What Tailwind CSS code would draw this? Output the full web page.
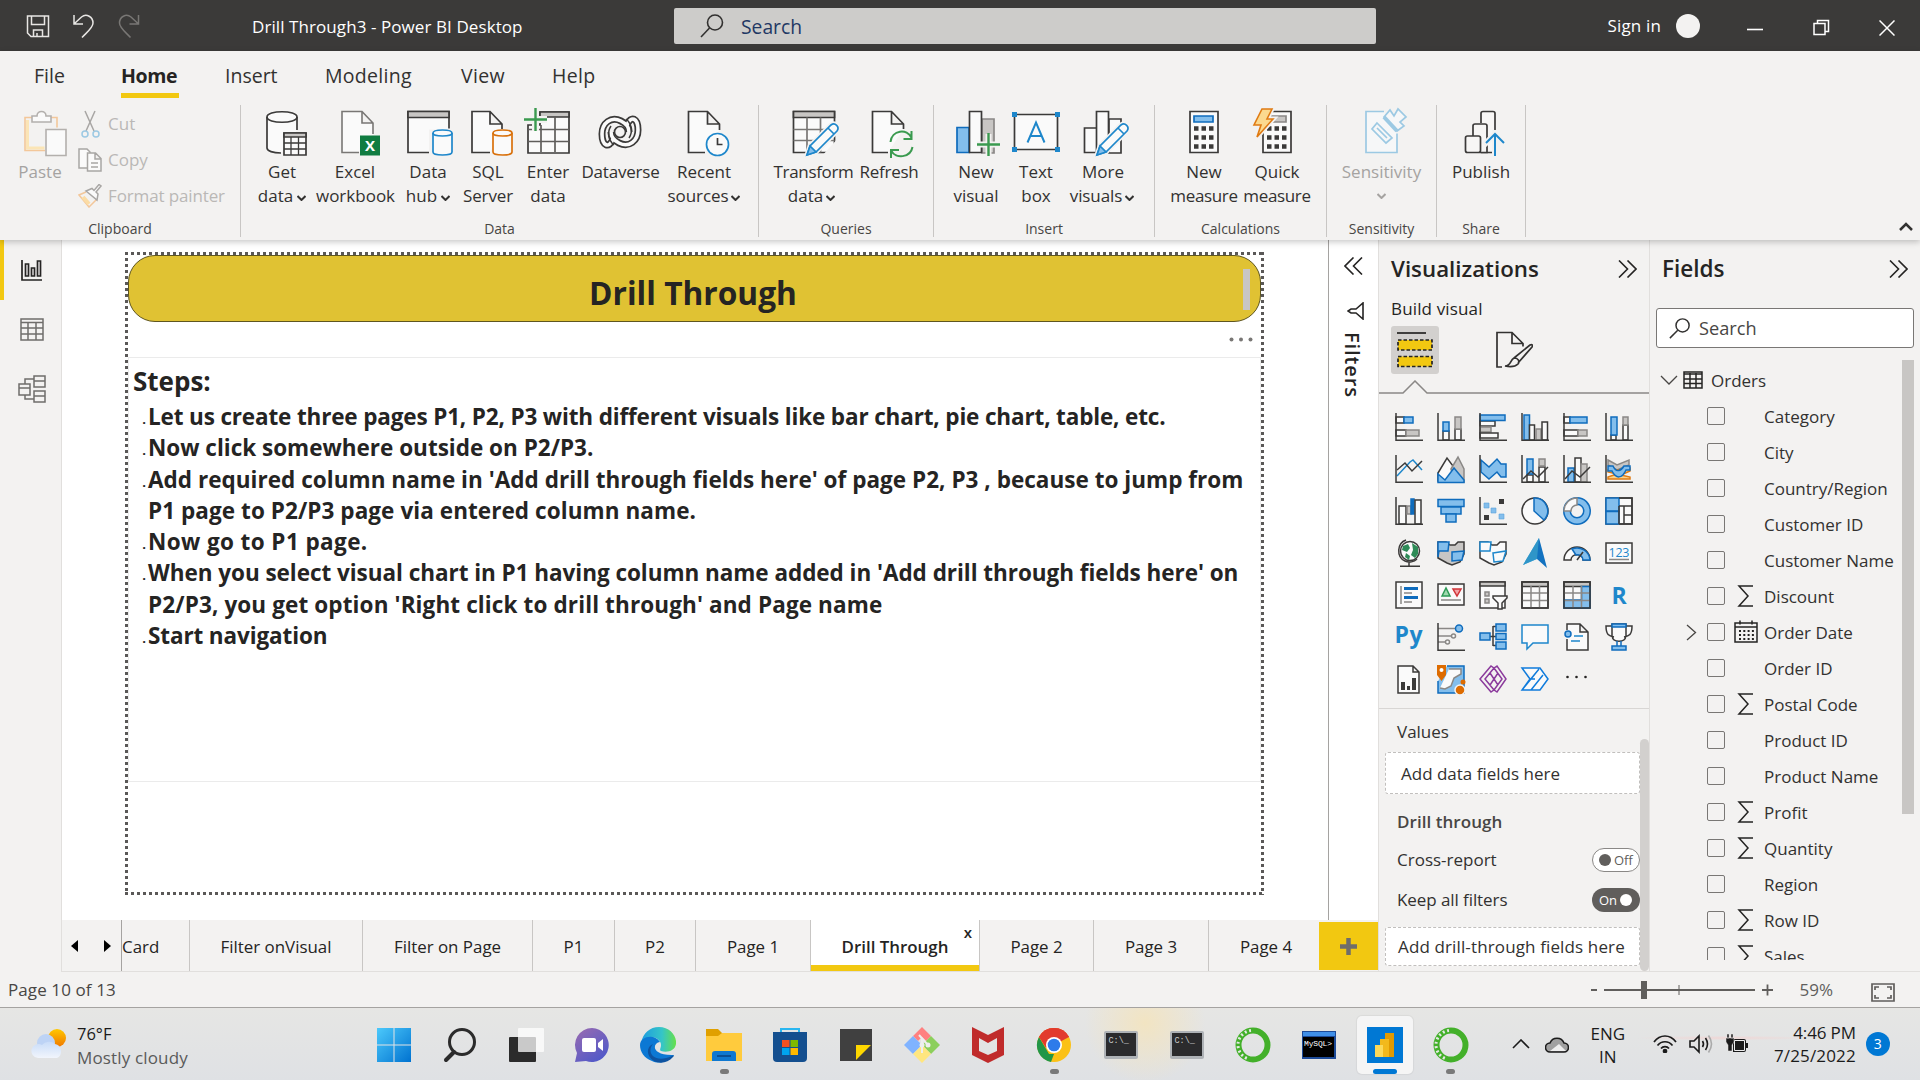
<!DOCTYPE html>
<html lang="en">
<head>
<meta charset="utf-8">
<title>Drill Through3 - Power BI Desktop</title>
<script src="https://cdn.jsdelivr.net/npm/@tailwindcss/browser@4"></script>
</head>
<body class="w-[1920px] h-[1080px] overflow-hidden flex flex-col font-['Open_Sans','Noto_Sans',sans-serif] text-[17px] text-[#323130] bg-[#f3f2f1] whitespace-nowrap">

<!-- Title bar -->
<header class="h-[51px] shrink-0 bg-[#3b3a39] flex items-center text-white">
  <div class="w-[252px] flex items-center pl-[26px] gap-[22px]">
    <svg class="w-6 h-6" viewBox="0 0 24 24" fill="none" stroke="#e8e6e4" stroke-width="1.5"><path d="M1.5 2h21v20.500h-17.500l-3.500-3.500zM5.500 2v8.500h13v-8.500M7.500 22.500v-6.500h9v6.500M11 19v3.500"/></svg>
    <svg class="w-6 h-6" viewBox="0 0 24 24" fill="none" stroke="#e8e6e4" stroke-width="1.5"><path d="M2 1v9h9M2.500 9.500l7-6.500c5-4 11.500 0 11.500 6c0 5-7 10-11 14.500"/></svg>
    <svg class="w-6 h-6" viewBox="0 0 24 24" fill="none" stroke="#797775" stroke-width="1.500"><path d="M20.500 1v9h-9M20 9.500l-7-6.500c-5-4-11.500 0-11.500 6c0 5 7 10 11 14.500"/></svg>
  </div>
  <div class="w-[422px] tracking-[0.080px] pt-[2px]">Drill Through3 - Power BI Desktop</div>
  <div class="w-[702px] h-9 mt-[1px] rounded-[2px] bg-[#cdccca] flex items-center pl-[26px] gap-[17px] text-[#1f3864]">
    <svg class="w-6 h-6" viewBox="0 0 24 24" fill="none" stroke="#323130" stroke-width="1.600"><circle cx="15" cy="8.500" r="7.500"/><path d="M9.500 14L1 23"/></svg>
    <span class="text-[19.300px] pt-[2px]">Search</span>
  </div>
  <div class="flex-1 flex items-center justify-end pr-[25px]">
    <span class="tracking-[0.150px]">Sign in</span>
    <div class="w-6 h-6 rounded-full bg-[#f3f2f1] ml-[15px] mr-[47px]"></div>
    <svg class="w-4 h-4 mr-[50px] mt-1" viewBox="0 0 16 16" stroke="#fff" stroke-width="1.600"><path d="M0 9.500h16"/></svg>
    <svg class="w-[17px] h-[17px] mr-[49px] mt-1" viewBox="0 0 17 17" fill="none" stroke="#fff" stroke-width="1.500"><path d="M1 4.500h11v11h-11zM4.500 4.500v-3h11v11h-3.500"/></svg>
    <svg class="w-4 h-4 mt-1" viewBox="0 0 16 16" stroke="#fff" stroke-width="1.500"><path d="M.5.500l15 15M15.500.500l-15 15"/></svg>
  </div>
</header>

<!-- Ribbon -->
<section class="relative z-10 h-[189px] shrink-0 bg-[#f3f2f1] shadow-[0_2px_6px_rgba(0,0,0,0.22)] flex flex-col">
  <nav class="h-[54px] flex text-[19.500px] pl-[34px]">
    <div class="w-[87px] pt-[10px]">File</div>
    <div class="w-[104px] pt-[10px]"><div class="w-[58px] h-[37px] border-b-[5px] border-[#f2c811] font-bold text-[#252423] tracking-[-0.400px]">Home</div></div>
    <div class="w-[100px] pt-[10px]">Insert</div>
    <div class="w-[136px] pt-[10px] tracking-[0.300px]">Modeling</div>
    <div class="w-[91px] pt-[10px] tracking-[0.300px]">View</div>
    <div class="pt-[10px] tracking-[0.300px]">Help</div>
  </nav>
  <div class="h-[132px] flex leading-6">
    <!-- Clipboard -->
    <div class="w-[241px] border-r border-[#c8c6c4] flex flex-col text-[#a5a3a1]">
      <div class="h-[110px] shrink-0 flex">
        <div class="w-[75px] pl-[7px] flex flex-col items-center">
          <svg class="w-[50px] h-[50px] mt-[3px] mb-[2px] ml-4 shrink-0" viewBox="0 0 50 50" fill="none" stroke="#b3b0ad" stroke-width="1.600"><path d="M9 9.500h-8v33h20M25 9.500h8v10" stroke="#f3c79a"/><path d="M3.500 12v28h17" stroke="#fbe5b6" stroke-width="3"/><path d="M8 14v-6h5c0-6 9-6 9 0h5v6z" fill="#fafafa"/><path d="M22 21.500h20v26h-20z" fill="#fafafa"/></svg>
          <span class="-ml-[2px]">Paste</span>
        </div>
        <div class="flex flex-col pl-[3px] pt-[1px] text-[#bab8b6]">
          <div class="h-9 flex items-center gap-[6px]"><svg class="w-6 h-7" viewBox="0 0 24 28" fill="none" stroke="#a8a6a4" stroke-width="1.500"><path d="M7 1l9 20M17 1l-9 20"/><g stroke="#9cc9e3"><circle cx="7" cy="24" r="3"/><circle cx="18" cy="24" r="3"/></g></svg>Cut</div>
          <div class="h-9 flex items-center gap-[6px]"><svg class="w-6 h-6" viewBox="0 0 24 24" fill="#fafafa" stroke="#a8a6a4" stroke-width="1.500"><path d="M1 1h8l3 3v16h-11z"/><path d="M9.500 5h8l5.500 5.500v12.500h-13.500zM17 5v6h6M13 15h7M13 19h7"/></svg>Copy</div>
          <div class="h-9 flex items-center gap-[6px]"><svg class="w-6 h-6" viewBox="0 0 24 24" fill="none" stroke="#a8a6a4" stroke-width="1.500"><path d="M8 8l-7 3 10 12 8-8" stroke="#f3c79a"/><path d="M5 13l6 7" stroke="#fbdca5" stroke-width="4"/><path d="M8 7l11 9 1-6-2-2 5-6-2-1.500-5 6-2-2z" fill="#fafafa"/></svg><span class="tracking-[-0.130px]">Format painter</span></div>
        </div>
      </div>
      <div class="text-center text-[14px] text-[#484644] leading-[28px]">Clipboard</div>
    </div>
    <!-- Data -->
    <div class="w-[518px] border-r border-[#c8c6c4] flex flex-col">
      <div class="h-[110px] shrink-0 flex pl-[5px]">
        <div class="w-[72px] flex flex-col items-center">
          <svg class="w-[50px] h-[50px] mt-[3px] mb-[2px] shrink-0 overflow-visible" viewBox="0 0 50 50" fill="#fafafa" stroke="#3b3a39" stroke-width="1.700"><path d="M24 45c-8 0-14-2-14-5v-31c0-7 30-7 30 0v13"/><path d="M10 9c0 7 30 7 30 0" fill="none"/><path d="M27 25h22v22h-22z"/><path d="M27 25h22v4h-22z" fill="#c8c6c4"/><path d="M27 35h22M27 41h22M34 29v18M41.500 29v18" stroke-width="1.300"/></svg>
          <span>Get</span><span class="flex items-center gap-1">data<svg class="w-[9px] h-[6px] mt-1" viewBox="0 0 9 6" fill="none" stroke="#323130" stroke-width="2"><path d="M.500 1l4 4 4-4"/></svg></span>
        </div>
        <div class="w-[74px] flex flex-col items-center">
          <svg class="w-[50px] h-[50px] mt-[3px] mb-[2px] shrink-0 overflow-visible" viewBox="0 0 50 50" fill="#fafafa" stroke="#797775" stroke-width="1.600"><path d="M29 44.500h-17v-41h20l11 11.500v11M32 3.500v11.500h11"/><path d="M30 27.500h20v20h-20z" fill="#107c41" stroke="none"/><text x="40" y="43" text-anchor="middle" font-size="15" font-weight="700" fill="#fff" stroke="none">X</text></svg>
          <span>Excel</span><span class="ml-[1px]">workbook</span>
        </div>
        <div class="w-[72px] flex flex-col items-center">
          <svg class="w-[50px] h-[50px] mt-[3px] mb-[2px] shrink-0 overflow-visible" viewBox="0 0 50 50" fill="#fafafa" stroke="#3b3a39" stroke-width="1.700"><path d="M28 44.500h-23v-41h41v17"/><path d="M5 3.500h41v6h-41z" fill="#c8c6c4"/><path d="M27.500 49v-26h20" stroke="#f3f2f1" stroke-width="3" fill="none"/><g stroke="#1e87cb"><path d="M30 25v19c0 4 19 4 19 0v-19c0-4-19-4-19 0z"/><path d="M30 25c0 4 19 4 19 0" fill="none"/></g></svg>
          <span>Data</span><span class="flex items-center gap-1">hub<svg class="w-[9px] h-[6px] mt-1" viewBox="0 0 9 6" fill="none" stroke="#323130" stroke-width="2"><path d="M.500 1l4 4 4-4"/></svg></span>
        </div>
        <div class="w-[48px] flex flex-col items-center">
          <svg class="w-[50px] h-[50px] mt-[3px] mb-[2px] shrink-0 overflow-visible" viewBox="0 0 50 50" fill="#fafafa" stroke="#3b3a39" stroke-width="1.700"><path d="M27 44.500h-18v-41h18l12 12.500v5M27 3.500v12.500h12"/><g stroke="#d9710c"><path d="M30 25v19c0 4 19 4 19 0v-19c0-4-19-4-19 0z"/><path d="M30 25c0 4 19 4 19 0" fill="none"/></g></svg>
          <span>SQL</span><span class="tracking-[-0.100px]">Server</span>
        </div>
        <div class="w-[72px] flex flex-col items-center">
          <svg class="w-[50px] h-[50px] mt-[3px] mb-[2px] shrink-0 overflow-visible" viewBox="0 0 50 50" fill="#fafafa" stroke="#3b3a39" stroke-width="1.700"><path d="M5 17h12v-13h29v41h-41z"/><path d="M17 4h29v5h-29z" fill="#c8c6c4"/><path d="M5 21.500h41M5 33.500h41M18 17v27M32 9v35" stroke="#5f5d5b"/><path d="M12.500 0v23M1 11.500h23" stroke="#f3f2f1" stroke-width="7"/><path d="M12.500 0v23M1 11.500h23" stroke="#3a9a4f" stroke-width="2.400"/></svg>
          <span>Enter</span><span>data</span>
        </div>
        <div class="w-[72px] flex flex-col items-center">
          <svg class="w-[50px] h-[50px] mt-[3px] mb-[2px] shrink-0 overflow-visible" viewBox="0 0 50 50" fill="none"><g stroke="#3b3a39" stroke-width="7"><path d="M18 31c-4 10-11 7-11-5c0-11 9-18 19-13c6 3 8 6 8 11"/><path d="M32 17c4-10 11-7 11 5c0 11-9 18-19 13c-6-3-8-6-8-11"/></g><g stroke="#fafafa" stroke-width="3.600"><path d="M18 31c-4 10-11 7-11-5c0-11 9-18 19-13c6 3 8 6 8 11"/><path d="M32 17c4-10 11-7 11 5c0 11-9 18-19 13c-6-3-8-6-8-11"/></g><circle cx="25" cy="24" r="5.500" fill="#f3f2f1" stroke="#3b3a39" stroke-width="1.700"/><path d="M31 11c6 5 7 13 3 19M19 37c-6-5-7-13-3-19" stroke="#3b3a39" stroke-width="1.500"/></svg>
          <span class="tracking-[-0.200px] ml-[1px]">Dataverse</span>
        </div>
        <div class="w-[96px] flex flex-col items-center">
          <svg class="w-[50px] h-[50px] mt-[3px] mb-[2px] shrink-0 overflow-visible" viewBox="0 0 50 50" fill="#fafafa" stroke="#3b3a39" stroke-width="1.700"><path d="M26 44.500h-16.500v-41h19l12 12.500v6M28.500 3.500v12.500h12"/><circle cx="38.500" cy="36.500" r="11" stroke="#1e87cb"/><path d="M38.500 30v6.500h5" fill="none"/></svg>
          <span>Recent</span><span class="flex items-center gap-[3px] tracking-[-0.100px]">sources<svg class="w-[9px] h-[6px] mt-1" viewBox="0 0 9 6" fill="none" stroke="#323130" stroke-width="2"><path d="M.500 1l4 4 4-4"/></svg></span>
        </div>
      </div>
      <div class="text-center text-[14px] text-[#484644] leading-[28px]">Data</div>
    </div>
    <!-- Queries -->
    <div class="w-[175px] border-r border-[#c8c6c4] flex flex-col">
      <div class="h-[110px] shrink-0 flex pl-[6px]">
        <div class="w-[96px] flex flex-col items-center">
          <svg class="w-[50px] h-[50px] mt-[3px] mb-[2px] shrink-0 overflow-visible" viewBox="0 0 50 50" fill="#fafafa" stroke="#3b3a39" stroke-width="1.700"><path d="M5.500 3.500h41v41h-41z"/><path d="M5.500 3.500h41v6h-41z" fill="#c8c6c4"/><path d="M5.500 21.500h41M5.500 32.500h41M19 9.500v35M32.500 9.500v35" stroke="#797775"/><path d="M33 49L52 28v22z" fill="#f3f2f1" stroke="none"/><path d="M19 47l3-9 21-21c4-3 9 2 6 6l-21 21z" stroke="#f3f2f1" stroke-width="5"/><path d="M19 47l3-9 21-21c4-3 9 2 6 6l-21 21zM40 20l6 6" stroke="#1e87cb"/><path d="M19 47l3-9 6 6z" fill="#83beec" stroke="#1e87cb"/></svg>
          <span class="tracking-[-0.350px] ml-[1px]">Transform</span><span class="flex items-center gap-[3px] -ml-[3px]">data<svg class="w-[9px] h-[6px] mt-1" viewBox="0 0 9 6" fill="none" stroke="#323130" stroke-width="2"><path d="M.500 1l4 4 4-4"/></svg></span>
        </div>
        <div class="w-[56px] flex flex-col items-center">
          <svg class="w-[50px] h-[50px] mt-[3px] mb-[2px] shrink-0 overflow-visible" viewBox="0 0 50 50" fill="#fafafa" stroke="#3b3a39" stroke-width="1.700"><path d="M24 44.500h-15.500v-41h19l12 12.500v5M27.500 3.500v12.500h12"/><g fill="none" stroke="#3a9a4f" stroke-width="2"><path d="M26.500 34c1-12 17-14 21-4M47.500 23v8h-8M48.500 39c-2 11-17 12-21 4M27 50v-8h8"/></g></svg>
          <span class="tracking-[-0.250px]">Refresh</span>
        </div>
      </div>
      <div class="text-center text-[14px] text-[#484644] leading-[28px]">Queries</div>
    </div>
    <!-- Insert -->
    <div class="w-[221px] border-r border-[#c8c6c4] flex flex-col">
      <div class="h-[110px] shrink-0 flex pl-[12px]">
        <div class="w-[60px] flex flex-col items-center">
          <svg class="w-[50px] h-[50px] mt-[3px] mb-[2px] shrink-0 overflow-visible" viewBox="0 0 50 50" fill="#fafafa" stroke="#3b3a39" stroke-width="1.700"><path d="M31 11h12v34h-12z" fill="#c8c6c4" stroke="#8a8886"/><path d="M6 19.500h12v25h-12z" fill="#83beec" stroke="#0f6cbd"/><path d="M18.500 3.500h12v41h-12z"/><path d="M37.500 26v23M26 36.500h23" stroke="#f3f2f1" stroke-width="6"/><path d="M37.500 25v23M26 36.500h23" stroke="#3a9a4f" stroke-width="2.400"/></svg>
          <span>New</span><span>visual</span>
        </div>
        <div class="w-[60px] flex flex-col items-center">
          <svg class="w-[50px] h-[50px] mt-[3px] mb-[2px] shrink-0 overflow-visible" viewBox="0 0 50 50" fill="#fafafa" stroke="#3b3a39" stroke-width="1.700"><path d="M3.500 6.500h43v35h-43z"/><path d="M16.500 34.500l8.500-20 8.500 20M19.500 28h11" fill="none" stroke="#1e87cb" stroke-width="2"/><path d="M1 4h5v5h-5zM44 4h5v5h-5zM1 39h5v5h-5zM44 39h5v5h-5z" fill="#1e87cb" stroke="none"/></svg>
          <span>Text</span><span>box</span>
        </div>
        <div class="w-[74px] flex flex-col items-center">
          <svg class="w-[50px] h-[50px] mt-[3px] mb-[2px] shrink-0 overflow-visible" viewBox="0 0 50 50" fill="#fafafa" stroke="#3b3a39" stroke-width="1.700"><path d="M31 11h12v34h-12zM6.500 20h12v24.500h-12zM18.500 3.500h12v41h-12z"/><path d="M19 47l3-9 21-21c4-3 9 2 6 6l-21 21z" stroke="#f3f2f1" stroke-width="5"/><path d="M19 47l3-9 21-21c4-3 9 2 6 6l-21 21zM40 20l6 6" stroke="#1e87cb"/><path d="M19 47l3-9 6 6z" fill="#83beec" stroke="#1e87cb"/></svg>
          <span>More</span><span class="flex items-center gap-[3px] tracking-[-0.100px] -ml-[2px]">visuals<svg class="w-[9px] h-[6px] mt-1" viewBox="0 0 9 6" fill="none" stroke="#323130" stroke-width="2"><path d="M.500 1l4 4 4-4"/></svg></span>
        </div>
      </div>
      <div class="text-center text-[14px] text-[#484644] leading-[28px]">Insert</div>
    </div>
    <!-- Calculations -->
    <div class="w-[172px] border-r border-[#c8c6c4] flex flex-col">
      <div class="h-[110px] shrink-0 flex pl-[13px]">
        <div class="w-[72px] flex flex-col items-center">
          <svg class="w-[50px] h-[50px] mt-[3px] mb-[2px] shrink-0 overflow-visible" viewBox="0 0 50 50" fill="#fafafa" stroke="#3b3a39" stroke-width="1.700"><path d="M11 3.500h28v41h-28z"/><path d="M15 8h19v6h-19z" fill="#83beec" stroke="#0f6cbd"/><path d="M15 20.500h20M15 29.500h20M15 38.500h20" stroke-width="4.500" stroke-dasharray="4.500 3"/></svg>
          <span>New</span><span class="tracking-[-0.350px]">measure</span>
        </div>
        <div class="w-[74px] flex flex-col items-center">
          <svg class="w-[50px] h-[50px] mt-[3px] mb-[2px] shrink-0 overflow-visible" viewBox="0 0 50 50" fill="#fafafa" stroke="#3b3a39" stroke-width="1.700"><path d="M11 3.500h28v41h-28z"/><path d="M16 8h18v6h-18z" fill="#c8c6c4" stroke="#8a8886"/><path d="M15 20.500h20M15 29.500h20M15 38.500h20" stroke-width="4.500" stroke-dasharray="4.500 3"/><path d="M10 1h10l-5 10h6l-16 18 4-12h-7z" stroke="#f3f2f1" stroke-width="5"/><path d="M10 1h10l-5 10h6l-16 18 4-12h-7z" fill="#fbd98f" stroke="#e07b13" stroke-width="1.600"/></svg>
          <span>Quick</span><span class="tracking-[-0.350px]">measure</span>
        </div>
      </div>
      <div class="text-center text-[14px] text-[#484644] leading-[28px]">Calculations</div>
    </div>
    <!-- Sensitivity -->
    <div class="w-[110px] border-r border-[#c8c6c4] flex flex-col">
      <div class="h-[110px] shrink-0 flex flex-col items-center text-[#a5a3a1]">
        <svg class="w-[50px] h-[50px] mt-[3px] mb-[2px] shrink-0 overflow-visible" viewBox="0 0 50 50" fill="#f6f7f8" stroke="#9cc9e3" stroke-width="1.700"><path d="M27 3.500h-18v41h31v-19"/><path d="M20 15l15 15-6 5-14-14zM20 20l10 10"/><path d="M27 9l6-7 4 6 4-7 8 8-6 5 4 4-7 5z"/><path d="M27 9l13 14" stroke-width="4"/></svg>
        <span>Sensitivity</span>
        <svg class="w-[9px] h-[6px] mt-[9px]" viewBox="0 0 9 6" fill="none" stroke="#a5a3a1" stroke-width="2"><path d="M.500 1l4 4 4-4"/></svg>
      </div>
      <div class="text-center text-[14px] text-[#484644] leading-[28px]">Sensitivity</div>
    </div>
    <!-- Share -->
    <div class="w-[89px] border-r border-[#c8c6c4] flex flex-col">
      <div class="h-[110px] shrink-0 flex flex-col items-center">
        <svg class="w-[50px] h-[50px] mt-[3px] mb-[2px] shrink-0 overflow-visible" viewBox="0 0 50 50" fill="#f7f6f5" stroke="#3b3a39" stroke-width="1.700"><path d="M25 15v-9.500q0-2 2-2h10q2 0 2 2v38q0 1-2 1h-13"/><path d="M17 28v-10q0-2 2-2h10q2 0 2 2v26.500h-6"/><rect x="9.500" y="28" width="15" height="16.500" rx="2"/><path d="M39 48v-26M28 37l11-11 11 11" stroke="#f3f2f1" stroke-width="6" fill="none"/><path d="M39 48v-22M30 35l9-9 9 9" fill="none" stroke="#1e87cb" stroke-width="2"/></svg>
        <span>Publish</span>
      </div>
      <div class="text-center text-[14px] text-[#484644] leading-[28px]">Share</div>
    </div>
    <div class="flex-1 flex justify-end items-end pr-[7px] pb-[6px]"><svg class="w-[14px] h-[9px]" viewBox="0 0 14 9" fill="none" stroke="#323130" stroke-width="2.500"><path d="M1 8l6-6 6 6"/></svg></div>
  </div>
</section>

<!-- Workspace -->
<main class="h-[732px] shrink-0 flex">
  <aside class="w-[62px] border-r border-[#e1dfdd] flex flex-col">
    <div class="h-[60px] border-l-4 border-[#f2c811] pl-[17px] flex items-center"><svg class="w-[21px] h-[22px]" viewBox="0 0 21 22" fill="none" stroke="#252423" stroke-width="1.700"><path d="M1 1v20h20M4.500 5h3v12h-3zM10.500 9h3v8h-3zM16.500 2h3v15h-3z"/></svg></div>
    <div class="h-[58px] pl-5 flex items-center"><svg class="w-6 h-[23px]" viewBox="0 0 24 23" fill="none" stroke="#6f6d6b" stroke-width="1.500"><path d="M1 1h22v21h-22zM1 4.500h22M1 10h22M1 16h22M8 4.500v17.500M16 4.500v17.500"/></svg></div>
    <div class="h-[62px] pl-[18px] flex items-center"><svg class="w-7 h-7" viewBox="0 0 28 28" fill="none" stroke="#6f6d6b" stroke-width="1.500"><path d="M1 9h11v11h-11zM1 13h11M16 1h11v11h-11zM16 6h11M16 16h11v11h-11zM16 21h11M7 9v-5h9M7 20v4h9"/></svg></div>
  </aside>

  <div class="w-[1316px] flex flex-col">
    <div class="h-[680px] flex bg-white">
      <div class="w-[1266px] pl-[63px] pt-3">
        <!-- Report page -->
        <div class="relative w-[1139px] h-[643px] p-[3px] flex flex-col text-[#252423]">
          <svg class="absolute inset-0 w-full h-full" viewBox="0 0 1139 643" fill="none" stroke="#5a5857" stroke-width="3" stroke-dasharray="3 3"><path d="M0 1.500h1139M0 641.500h1139M1.500 0v643M1137.500 0v643"/></svg>
          <div class="relative h-[67px] shrink-0 rounded-[27px] border border-[#5f5620] bg-[#e0c233] flex items-center justify-center pt-[8px] pr-[3px] text-[31.700px] font-bold">
            Drill Through
            <div class="absolute right-[10px] top-[13px] w-[7px] h-[41px] bg-[#c8c6c4]"></div>
          </div>
          <div class="h-[35px] shrink-0 flex justify-end items-center pr-2"><svg class="w-6 h-[5px]" viewBox="0 0 24 5" fill="#797775"><circle cx="2.500" cy="2.500" r="2"/><circle cx="12" cy="2.500" r="2"/><circle cx="21.500" cy="2.500" r="2"/></svg></div>
          <div class="h-[425px] shrink-0 border border-[#ebebeb] pl-1 pt-[7px] font-bold text-[22.500px]">
            <div class="text-[26px] leading-8">Steps:</div>
            <ul class="pt-[4px] leading-[31.290px]">
              <li class="flex"><span class="w-[15px] h-[31px] text-right text-[13px] leading-[37px] pr-[2px]">.</span><span class="tracking-[-0.150px]">Let us create three pages P1, P2, P3 with different visuals like bar chart, pie chart, table, etc.</span></li>
              <li class="flex"><span class="w-[15px] h-[31px] text-right text-[13px] leading-[37px] pr-[2px]">.</span><span>Now click somewhere outside on P2/P3.</span></li>
              <li class="flex"><span class="w-[15px] h-[31px] text-right text-[13px] leading-[37px] pr-[2px]">.</span><span><span class="tracking-[0.030px]">Add required column name in 'Add drill through fields here' of page P2, P3 , because to jump from</span><br><span class="tracking-[0.070px]">P1 page to P2/P3 page via entered column name.</span></span></li>
              <li class="flex"><span class="w-[15px] h-[31px] text-right text-[13px] leading-[37px] pr-[2px]">.</span><span class="tracking-[0.400px]">Now go to P1 page.</span></li>
              <li class="flex"><span class="w-[15px] h-[31px] text-right text-[13px] leading-[37px] pr-[2px]">.</span><span><span class="tracking-[-0.040px]">When you select visual chart in P1 having column name added in 'Add drill through fields here' on</span><br><span class="tracking-[0.120px]">P2/P3, you get option 'Right click to drill through' and Page name</span></span></li>
              <li class="flex"><span class="w-[15px] h-[31px] text-right text-[13px] leading-[37px] pr-[2px]">.</span><span class="tracking-[-0.120px]">Start navigation</span></li>
            </ul>
          </div>
        </div>
      </div>
      <!-- Collapsed filters pane -->
      <div class="w-[50px] border-l border-[#a5a3a1] flex flex-col items-center pt-[17px]">
        <svg class="w-[19px] h-[18px]" viewBox="0 0 19 18" fill="none" stroke="#252423" stroke-width="1.600"><path d="M9.500.500l-8.500 8.500 8.500 8.500M18 .500l-8.500 8.500 8.500 8.500"/></svg>
        <svg class="w-[17px] h-[18px] mt-[27px] ml-[3px]" viewBox="0 0 17 18" fill="none" stroke="#252423" stroke-width="1.600"><path d="M16 1v16l-7-6h-5l-3-2 3-2h5z"/></svg>
        <span class="[writing-mode:vertical-rl] mt-[12px] mr-[3px] font-semibold text-[20px] tracking-[0.900px] leading-6 text-[#252423]">Filters</span>
      </div>
    </div>
    <!-- Page tabs -->
    <div class="h-[52px] flex items-stretch border-b border-[#e1dfdd] leading-[53px] text-[#252423] text-center text-[16.900px]">
      <div class="w-[60px] border-r border-[#a5a3a1] flex items-center justify-between pl-[9px] pr-[10px]">
        <svg class="w-[7px] h-3" viewBox="0 0 7 12"><path d="M7 0v12l-7-6z"/></svg><svg class="w-[7px] h-3" viewBox="0 0 7 12"><path d="M0 0v12l7-6z"/></svg>
      </div>
      <div class="w-[68px] border-r border-[#c8c6c4] text-left">Card</div>
      <div class="w-[173px] border-r border-[#c8c6c4]">Filter onVisual</div>
      <div class="w-[170px] border-r border-[#c8c6c4]">Filter on Page</div>
      <div class="w-[82px] border-r border-[#c8c6c4]">P1</div>
      <div class="w-[81px] border-r border-[#c8c6c4]">P2</div>
      <div class="w-[115px] border-r border-[#c8c6c4]">Page 1</div>
      <div class="relative w-[169px] border-r border-[#c8c6c4] bg-white shadow-[inset_0_-6px_#f2c811] font-semibold">Drill Through<span class="absolute right-[7px] top-0 leading-6 text-[15px]">x</span></div>
      <div class="w-[114px] border-r border-[#c8c6c4]">Page 2</div>
      <div class="w-[115px] border-r border-[#c8c6c4]">Page 3</div>
      <div class="w-[110px] pl-1">Page 4</div>
      <div class="w-[59px] mt-[2px] mb-[1px] bg-[#f2c811] flex items-center justify-center"><svg class="w-[17px] h-[17px]" viewBox="0 0 17 17" stroke="#6f6d6b" stroke-width="4.500"><path d="M8.500 0v17M0 8.500h17"/></svg></div>
    </div>
  </div>

  <!-- Visualizations pane -->
  <section class="w-[272px] border-x border-b border-[#e1dfdd] flex flex-col">
    <div class="h-[60px] flex items-center justify-between pl-3 pr-[12px] pb-[2px] text-[22.300px] font-semibold text-[#252423]">Visualizations<svg class="w-[19px] h-[18px]" viewBox="0 0 19 18" fill="none" stroke="#252423" stroke-width="1.600"><path d="M1 .500l8.500 8.500-8.500 8.500M9.500 .500l8.500 8.500-8.500 8.500"/></svg></div>
    <div class="h-[26px] pl-3 leading-[18px] text-[#252423] font-medium tracking-[0.150px]">Build visual</div>
    <div class="flex h-[48px] pl-3 gap-[56px]">
      <div class="w-12 h-12 rounded-[3px] bg-[#d2d0ce] flex items-center justify-center"><svg class="w-9 h-9" viewBox="0 0 36 36" fill="#f2c811" stroke="#252423" stroke-width="1.700"><path d="M0 1h29"/><path d="M1 8h34v10h-34zM1 24.500h34v10h-34z" stroke-dasharray="3.500 2"/></svg></div>
      <svg class="w-[38px] h-[38px] mt-[5px]" viewBox="0 0 38 38" fill="none" stroke="#323130" stroke-width="1.700"><path d="M7 36h-5v-34.500h15l11 11v3M17 1.500v11h11"/><path d="M10 35c6 0 5-6 9-8 4 0 6 3 4 6-3 3-8 3-13 2zM19 27l16-13c2-1 3 0 2 2l-14 16" fill="#f3f2f1"/></svg>
    </div>
    <svg class="w-[270px] h-[14px] mt-[6px]" viewBox="0 0 270 14" fill="none" stroke="#8a8886" stroke-width="1.500"><path d="M0 13h24l12-12 12 12h222"/></svg>
    <div class="h-[315px] border-b border-[#d8d6d4] grid grid-cols-[repeat(6,28px)] auto-rows-[28px] gap-[14px] pl-4 pt-[19px]" id="visuals"></div>
    <div class="h-[262px] flex">
      <div class="w-[261px] pl-[6px] flex flex-col">
        <div class="pl-3 h-[43px] leading-[46px]">Values</div>
        <div class="h-[42px] bg-white rounded-[3px] border border-dashed border-[#c1bfbd] pl-[15px] leading-[42px]">Add data fields here</div>
        <div class="pl-3 h-[54px] leading-[55px] font-semibold text-[#484644] tracking-[0.050px]">Drill through</div>
        <div class="pl-3 h-[24px] leading-[24px] flex justify-between">Cross-report<div class="w-12 rounded-full bg-white border border-[#8a8886] flex items-center pl-[6px] gap-[3px] text-[13px] text-[#605e5c]"><i class="w-3 h-3 rounded-full bg-[#605e5c]"></i>Off</div></div>
        <div class="pl-3 h-[24px] mt-4 leading-[24px] flex justify-between tracking-[-0.080px]">Keep all filters<div class="w-12 rounded-full bg-[#605e5c] flex items-center pl-[7px] gap-[3px] text-[13px] text-white">On<i class="w-3 h-3 rounded-full bg-white"></i></div></div>
        <div class="h-[39px] mt-[15px] bg-white rounded-[3px] border border-dashed border-[#c1bfbd] pl-[12px] leading-[38px] tracking-[0.130px]">Add drill-through fields here</div>
      </div>
      <div class="w-[9px] mt-[30px] rounded-full bg-[#d2d0ce]"></div>
    </div>
  </section>

  <!-- Fields pane -->
  <section class="w-[270px] border-b border-[#e1dfdd] flex flex-col">
    <div class="h-[60px] flex items-center justify-between pl-[12px] pr-[12px] pb-[2px] text-[22.500px] font-semibold text-[#252423]">Fields<svg class="w-[19px] h-[18px]" viewBox="0 0 19 18" fill="none" stroke="#252423" stroke-width="1.600"><path d="M1 .500l8.500 8.500-8.500 8.500M9.500 .500l8.500 8.500-8.500 8.500"/></svg></div>
    <div class="w-[258px] h-10 mt-2 ml-[6px] rounded-[3px] border border-[#797775] bg-white flex items-center gap-[9px] pl-3 text-[18.200px] text-[#484644]"><svg class="w-[21px] h-[21px]" viewBox="0 0 24 24" fill="none" stroke="#323130" stroke-width="1.700"><circle cx="15.500" cy="8.500" r="7.500"/><path d="M10 14L1 23"/></svg><span class="pt-[2px]">Search</span></div>
    <div class="h-[612px] flex">
      <div class="w-[252px] overflow-hidden pt-[14px]" id="fields">
        <div class="h-9 flex items-center pl-[10px]"><svg class="w-[18px] h-[10px]" viewBox="0 0 18 10" fill="none" stroke="#484644" stroke-width="1.300"><path d="M1 1l8 8 8-8"/></svg><svg class="w-5 h-[18px] ml-[5px] mr-2" viewBox="0 0 20 18" fill="none" stroke="#252423" stroke-width="1.500"><path d="M1 1h18v16h-18zM1 3h18M1 8h18M1 12.500h18M7 2v15M13 2v15"/></svg><span class="pt-[1px]">Orders</span></div>
      </div>
      <div class="w-3 h-[454px] mt-3 bg-[#c8c6c4]"></div>
    </div>
  </section>
</main>

<!-- Status bar -->
<footer class="h-[36px] shrink-0 flex items-center justify-between pl-2 pr-[25px] pt-[1px] text-[#484644] border-b border-[#a5a3a1]">
  <span class="tracking-[0.100px]">Page 10 of 13</span>
  <div class="flex items-center">
    <svg class="w-[183px] h-[22px] mr-[26px]" viewBox="0 0 183 22" stroke="#605e5c"><path d="M0 11h6M171 11h11M176.500 5.500v11" stroke-width="1.800"/><path d="M13 11h151" stroke-width="2"/><path d="M53 2v18" stroke-width="6"/><path d="M88 6v10" stroke-width="1"/></svg>
    <span class="mr-[38px] text-[#605e5c]">59%</span>
    <svg class="w-6 h-[19px] mt-1" viewBox="0 0 24 19" fill="none" stroke="#605e5c" stroke-width="1.700"><path d="M1 1h22v17h-22z"/><path d="M4 7v-3h4M16 4h4v3M20 12v3h-4M8 15h-4v-3"/></svg>
  </div>
</footer>

<!-- Taskbar -->
<footer class="h-[72px] shrink-0 flex items-center bg-[radial-gradient(circle_at_1145px_15px,#f2e4c2_0,transparent_60px),radial-gradient(ellipse_at_1725px_30px,#f0d6d5_0,transparent_90px),linear-gradient(#e6e6e4,#dfe1e4)] text-[#1b1b1b]">
  <div class="w-[361px] flex items-center pl-[30px] gap-[11px]">
    <svg class="w-9 h-8" viewBox="0 0 36 32"><defs><linearGradient id="cl" x2="0" y2="1"><stop stop-color="#c9dcf8"/><stop offset="1" stop-color="#f1f5fc"/></linearGradient><linearGradient id="sun" x2="0" y2="1"><stop stop-color="#ffc800"/><stop offset="1" stop-color="#f07800"/></linearGradient></defs><circle cx="27" cy="10" r="9" fill="url(#sun)"/><circle cx="16" cy="15" r="9" fill="#bdd3f5"/><path d="M8 30a7 7 0 1 1 4-13a9 9 0 0 1 13-1a7.500 7.500 0 0 1 2 14z" fill="url(#cl)"/></svg>
    <div class="leading-6 pt-[3px]"><div class="text-[16.500px]">76°F</div><div class="text-[#5a5a5a] text-[17px] tracking-[0.150px]">Mostly cloudy</div></div>
  </div>
  <div class="flex h-[72px]" id="apps"></div>
  <div class="flex-1 flex items-center pl-[28px]">
    <svg class="w-[18px] h-[10px]" viewBox="0 0 18 10" fill="none" stroke="#1b1b1b" stroke-width="1.600"><path d="M1 9l8-8 8 8"/></svg>
    <svg class="w-6 h-[18px] ml-[15px]" viewBox="0 0 24 18" fill="#a0a0a0" stroke="#1b1b1b" stroke-width="1.600"><path d="M5 17a4.500 4.500 0 0 1 0-9a7.500 7.500 0 0 1 14 0a4.500 4.500 0 0 1 0 9z"/><path d="M5 16l9-7 7 7z" fill="#eee" stroke="none"/></svg>
    <div class="ml-[20px] w-[38px] text-center leading-[23px] text-[17px] pt-[1px]">ENG<br>IN</div>
    <svg class="w-6 h-[18px] ml-[26px]" viewBox="0 0 24 18" fill="none" stroke="#1b1b1b" stroke-width="1.700"><path d="M1 7c6-8 16-8 22 0M4.500 10.500c4-5 11-5 15 0M8 13.500c2-2.500 6-2.500 8 0"/><circle cx="12" cy="16" r="1.500" fill="#1b1b1b"/></svg>
    <svg class="w-6 h-[20px] ml-3" viewBox="0 0 24 20" fill="none" stroke="#1b1b1b" stroke-width="1.600"><path d="M1 7h4l5-5v16l-5-5h-4zM13.500 7q2 3 0 6M16.500 4q4 6 0 12"/><path d="M19.500 1.500q6 8.500 0 17" stroke="#aaa"/></svg>
    <svg class="w-6 h-5 ml-[12px]" viewBox="0 0 24 20" fill="#1b1b1b"><path d="M8 5h11q2 0 2 2v2h2v5h-2v2q0 2-2 2h-11z"/><path d="M9.500 6.500h10v10h-10z" stroke="#eee"/><path d="M1 4h8v4l-2 3v6h-4v-6l-2-3zM2 0h2v4h-2zM6 0h2v4h-2z" stroke="#e6e0e0" stroke-width=".5"/></svg>
    <div class="ml-[17px] w-[90px] text-right leading-[23px] text-[17px]"><span class="tracking-[-0.150px]">4:46 PM</span><br><span class="tracking-[0.150px]">7/25/2022</span></div>
    <div class="w-6 h-6 ml-[10px] rounded-full bg-[#0078d4] text-white text-[14px] leading-6 text-center">3</div>
  </div>
</footer>

<script>
// Tree rows of the Orders table: [label, icon]
const sigma = '<svg class="w-6 h-6 mx-1" viewBox="0 0 24 24" fill="none" stroke="#252423" stroke-width="1.500"><path d="M19 2h-14l9 10-9 10h14"/></svg>';
const calendar = '<svg class="w-6 h-6 mx-1" viewBox="0 0 24 24" fill="none" stroke="#252423" stroke-width="1.500"><path d="M1 3h22v19h-22zM1 7h22M6 .500v4M18 .500v4"/><path d="M5 11h15M5 15h15M5 19h15" stroke-width="2" stroke-dasharray="2 2.300"/></svg>';
const rows = [['Category'],['City'],['Country/Region'],['Customer ID'],['Customer Name'],['Discount',sigma],['Order Date',calendar],['Order ID'],['Postal Code',sigma],['Product ID'],['Product Name'],['Profit',sigma],['Quantity',sigma],['Region'],['Row ID',sigma],['Sales',sigma]];
document.getElementById('fields').insertAdjacentHTML('beforeend', rows.map(([t,i]) =>
  `<div class="h-9 flex items-center"><div class="w-[57px] pl-[36px]">${i===calendar?'<svg class="w-[11px] h-[17px]" viewBox="0 0 11 17" fill="none" stroke="#484644" stroke-width="1.300"><path d="M1 1l8.500 7.500-8.500 7.500"/></svg>':''}</div><div class="w-[18px] h-[18px] rounded-[2px] border border-[#797775]"></div><div class="w-[39px] pl-[5px]">${i||''}</div><span class="pt-[2px]">${t}</span></div>`).join(''));

// Visual types, drawn on a 28px grid
const D='#3b3a39', B='#0f6cbd', L='#83beec', G='#8a8886', H='#c8c6c4', W='#fafafa', S='#1e87cb';
const r=(x,y,w,h,f,s)=>`<rect x="${x}" y="${y}" width="${w}" height="${h}" fill="${f}" stroke="${s}"/>`;
const p=(d,s=D,f='none')=>`<path d="${d}" stroke="${s}" fill="${f}"/>`;
const ax=p('M1 0v27.300h27');
const visuals=[
 r(1,4,8,6,W,D)+r(9,4,9,6,L,B)+r(1,17,10,6,W,D)+r(11,17,13,6,H,G)+ax,
 r(6,18,6,9,W,D)+r(6,9,6,9,L,B)+r(18,16,6,11,W,D)+r(18,4,6,12,H,G)+ax,
 r(1,8,15,5,W,D)+r(1,2,25,5.500,L,B)+r(1,14,11,5,H,G)+r(1,20,18,5,W,D)+ax,
 r(3,2,5.500,25,L,B)+r(8.500,12,5,15,W,D)+r(15,16,5,11,H,G)+r(21,9,5.500,18,W,D)+ax,
 r(1,4,6,6,W,D)+r(7,4,17,6,L,B)+r(1,17,14,6,W,D)+r(15,17,9,6,H,G)+ax,
 r(6,22,5,5,W,D)+r(6,4,6,18,L,B)+r(18,12,5,15,W,D)+r(18,4,5,8,H,G)+ax,
 p('M2 21l13-14 3-2 9 10',S)+p('M2 15l8-7 7 8 10-10')+ax,
 p('M1 18l9-15 9 12-9 11h-9z',D,W)+p('M14 14l7-12 6 12v13h-9z',G,H)+p('M1 19l7 6 9-12 10 12v2.500h-26z',B,L),
 p('M2 5l8 7 8-8 4 5h5v13h-5l-4-5-8 7-8-7z',B,L)+ax,
 r(6,20,6,7,W,D)+r(6,4,6,15,L,B)+r(18,12,6,15,W,D)+r(18,4,6,7,H,G)+p('M2 24l8-8 7 6 10-10')+ax,
 r(5,13,6,14,L,B)+r(12,3,6,24,W,D)+r(18,9,6,18,H,G)+p('M2 24l7-8 8 6 10-10')+ax,
 p('M3 5l9 5 12-5v5l-12 5-9-5z',G,H)+p('M3 15h9l13-2v3l-9 4 9 2v2h-22v-2l9-3-9-2z','#e07b13','#fbd28a')+p('M3 11h5c3 7 8 5 11 0h6v4h-4c-4 9-10 9-14 1h-4z',B,L)+ax,
 r(4,9,7,18,W,D)+r(12,9,4,8,H,G)+r(16,2,3,15,B,B)+r(20,3,6,24,W,D)+ax,
 r(1,2.500,26,7,L,B)+r(4,10,20,7,L,B)+r(9,17,10,8,L,B),
 '<path d="M5 6h5v5h-5zM12 11h5v5h-5zM20 17h5v5h-5z" fill="#83beec" stroke="#5aa2dc" stroke-width=".6"/><path d="M20 2h5v5h-5zM5 18h5v5h-5z" fill="#3b3a39"/>'+ax,
 '<circle cx="14" cy="14" r="13" fill="#fafafa" stroke="#3b3a39"/>'+p('M13 1a13 13 0 0 1 10 22l-10-9z',B,L),
 '<circle cx="14" cy="14" r="10" fill="none" stroke="#0f6cbd" stroke-width="8"/><circle cx="14" cy="14" r="10" fill="none" stroke="#83beec" stroke-width="5"/>'+p('M1 14a13 13 0 0 1 13-13v7a6 6 0 0 0-6 6z',G,W),
 r(1,1,26,26,W,D)+r(1,1,13,13,L,B)+r(1,14.500,13,12.500,L,B)+p('M14 9h13M19 9v18M14 9v18M19 18h8')+p('M14 1h13v26h-13'),
 '<circle cx="15" cy="12" r="9.500" fill="#fafafa" stroke="#3b3a39"/><path d="M8 7l5-2 2 4-3 4-5-2zM17 4l6 4v7l-3 4-4-3 2-5zM11 14l4 3-1 4-4-3z" fill="#2e8b57"/>'+p('M11 1c-9 3-10 17-1 21 4 2 9 1 12-2M14 23v4M5 27.300h20'),
 p('M1 3h8l4 3h5l3-3h6v12l-4 8-8 3-5-2-9-5v-9z',D,H)+p('M1 3h11l-1 9h-9l-1 6zM15 13l12-1-2 9-10 1z',B,L),
 p('M1 3h8l4 3h5l3-3h6v12l-4 8-8 3-5-2-9-5v-9z',D,W)+p('M1 3h11l-1 9h-10zM14 14l13-2-3 10-9 1z',S,W),
 '<path d="M18-1l-16 27 14-6z" fill="#50b0e0"/><path d="M18-1v20l-16 7z" fill="#2f95c8"/><path d="M18-1l8 30-10-9z" fill="#1272c0"/>',
 p('M1 21a13 13 0 0 1 26 0h-7c0-7-12-7-12 0z',D,W)+p('M9 10a13 13 0 0 1 18 11h-7c0-4-4-6-7-5z',B,L)+p('M14 21l6-8',D,D),
 r(1,4,26,20,W,D)+'<text x="14" y="18" font-size="12.500" text-anchor="middle" fill="#1e87cb" textLength="21">123</text>'+p('M4 20.500h20',G),
 r(1,1,26,26,W,D)+p('M6 5v18',G)+p('M9 7.500h14M9 16.500h14',B).replace('/>',' stroke-width="3"/>')+p('M9 12h8M9 21h8',G),
 r(1,3,26,21,W,D)+p('M5 15l4-8 4 8z','#2e9b57','#9fd9ae')+p('M16 8h8l-4 7z','#d13438','#f3a3a5')+p('M4 19h20',G),
 r(1,1,25,26,W,D)+r(1,1,25,4,H,D)+p('M6 11h4v4h-4zM6 18h4v4h-4z',G,H)+p('M14 15h14v2l-5 5v6h-4v-6l-5-5z',D,W),
 r(1,1,26,26,W,D)+r(1,1,26,4.500,H,D)+p('M1 12h26M1 19.500h26M10 5v22M18.500 5v22',G)+p('M1 1h26v26h-26z'),
 r(1,1,26,26,W,D)+r(1,1,26,4.500,H,D)+p('M18.500 5.500h8.500v21.500h-26v-8h17.500z',B,L)+p('M1 12h26M1 19.500h26M10 5v22M18.500 5v22',G)+p('M1 1h26v26h-26z'),
 '<text x="14" y="22.500" font-size="23" font-weight="700" text-anchor="middle" fill="#1e87cb">R</text>',
 '<text x="13.500" y="20" font-size="23" font-weight="700" text-anchor="middle" fill="#1e87cb" textLength="28">Py</text>',
 p('M1 5.500h18M1 13h14M1 19h8',G)+'<circle cx="22" cy="5.500" r="3.500" fill="#83beec" stroke="#0f6cbd"/><circle cx="16.500" cy="13" r="2" fill="#fafafa" stroke="#8a8886"/><circle cx="10.500" cy="19" r="2" fill="#fafafa" stroke="#8a8886"/>'+ax,
 p('M11 13.500h6M14 3v20M14 3.500h4M14 22.500h4')+r(1,10,10,7,L,B)+r(17,1,10,7,L,B)+r(17,10.500,10,6,L,B)+r(17,19,10,7,L,B),
 p('M1 2h26v18h-15l-6 6v-6h-5z',S,W),
 p('M4 7v-6h13l8 8v18h-21v-11M17 1v8h8',D,W)+'<circle cx="5" cy="11" r="3" fill="#83beec" stroke="#0f6cbd"/>'+p('M11 13h9M8 18h9',S),
 p('M7 3h-6c0 9 3 10 8 11M21 3h6c0 9-3 10-8 11M7 1h14v12c-1 7-13 7-14 0z',D,W)+p('M7 1h14v3h-14zM12 18v5M16 18v5M7 23h14v4h-14z',B,L),
 p('M3 1h15l6 6v21h-21zM18 1v6h6',D,W)+'<path d="M6 17h4v8h-4zM12 21h3v4h-3zM17 13h4v12h-4z" fill="#3b3a39"/>',
 p('M10 1h17v27h-26v-12',B,L)+p('M12 4h12v5l-7 4-3 8-6 3-5-1',G,W)+'<path d="M0 0h9v10l-4.500 6-4.500-6z" fill="#dd6b00"/><circle cx="4.500" cy="5" r="2" fill="#fff"/><circle cx="23" cy="25" r="5" fill="#dd6b00" stroke="#f3f2f1"/><circle cx="26" cy="17" r="2.500" fill="#dd6b00"/>',
 p('M12 1l-11 13 11 13 3-2 3 2 9-13-9-13-3 2zM15 3l-9 11 9 11M15 3l8 11-8 11M11 8l8 12M19 8l-8 12','#8b3a9c','none'),
 p('M1 3h18l8 11-8 11h-18l8-11zM1 25l17-21M10 25l12-15M1 3l8 11h5','#0f7bdc',W),
 '<g fill="#252423"><circle cx="4.500" cy="12" r="1.300"/><circle cx="13.500" cy="12" r="1.300"/><circle cx="22.500" cy="12" r="1.300"/></g>'];
document.getElementById('visuals').innerHTML=visuals.map(v=>`<svg class="w-7 h-7 overflow-visible" viewBox="0 0 28 28" stroke-width="1.500">${v}</svg>`).join('');

// Pinned and running apps: [artwork on a 36px grid, indicator]
const cmd='<rect x="1" y="4" width="34" height="28" rx="2" fill="#aeb2b6"/><rect x="3" y="6" width="30" height="23" fill="#2b2b2d"/><text x="5.500" y="16" font-size="8.500" fill="#ccc" font-family="Liberation Mono">C:\\_</text>';
const ana='<circle cx="18" cy="18" r="14.500" fill="none" stroke="#43b02a" stroke-width="6"/><path d="M16 3.500A14.500 14.500 0 0 0 14 32" fill="none" stroke="#e6e8e6" stroke-width="3" stroke-dasharray="2 2.500"/>';
const apps=[
 ['<defs><linearGradient id="wn" x2="1" y2="1"><stop stop-color="#4cc9fb"/><stop offset="1" stop-color="#0072d0"/></linearGradient></defs><path d="M1 1h16.500v16.500h-16.500zM18.500 1h16.500v16.500h-16.500zM1 18.500h16.500v16.500h-16.500zM18.500 18.500h16.500v16.500h-16.500z" fill="url(#wn)"/>'],
 ['<circle cx="20" cy="15" r="12.500" fill="none" stroke="#2b2b2b" stroke-width="3"/><path d="M12 25l-8 8" stroke="#2b2b2b" stroke-width="4" stroke-linecap="round"/>'],
 ['<rect x="1" y="10" width="27" height="25" rx="1" fill="#2b2b2b"/><rect x="10" y="1" width="26" height="24" rx="1" fill="#fff" fill-opacity=".75"/>'],
 ['<defs><linearGradient id="ch" x2=".7" y2="1"><stop stop-color="#9b6bb0"/><stop offset="1" stop-color="#5059c9"/></linearGradient></defs><path d="M18 1a17 17 0 1 1-6 33l-11 1 2-9a17 17 0 0 1 15-25z" fill="url(#ch)"/><rect x="8" y="11" width="14" height="14" rx="2" fill="#fff"/><path d="M24 16l5-4v12l-5-4z" fill="#fff"/>'],
 ['<defs><linearGradient id="eg" x2="1"><stop stop-color="#1d9be0"/><stop offset=".6" stop-color="#35c5c8"/><stop offset="1" stop-color="#66e04a"/></linearGradient></defs><path d="M1 16c2-10 9-16 18-16 11 0 18 9 17 17-1 7-9 9-15 7-2-1 0-3 0-6 0-7-12-12-20-2z" fill="url(#eg)"/><path d="M0 18c0-8 14-12 20-3-8 1-9 14 14 13-6 8-16 9-22 6-8-3-12-9-12-16z" fill="#0c78d4"/><path d="M13 17c-7 8 1 20 19 12 3-1 2 0 1 1-5 6-13 7-19 4-8-5-8-14-1-17z" fill="#0e53a0"/>'],
 ['<path d="M0 2h12l4 4h20v28h-36z" fill="#e0a000"/><path d="M0 9h12l4-3h20v28h-36z" fill="#ffcb3d"/><path d="M6 34v-7q0-3 3-3h18q3 0 3 3v7z" fill="#0f78d0"/><path d="M11 29h14" stroke="#0a4f94" stroke-width="2"/>','dot'],
 ['<path d="M9 9v-7h18v7" fill="none" stroke="#29b6f0" stroke-width="2"/><path d="M1 5h34v26q0 4-4 4h-26q-4 0-4-4z" fill="#144f8f"/><path d="M10 13h7.500v7h-7.500z" fill="#f25022"/><path d="M18.500 13h7.500v7h-7.500z" fill="#7fba00"/><path d="M10 21h7.500v7h-7.500z" fill="#00a4ef"/><path d="M18.500 21h7.500v7h-7.500z" fill="#ffb900"/>'],
 ['<path d="M2 2h32v32h-32z" fill="#404040"/><path d="M18 18h15l-15 15z" fill="#ffd800"/>'],
 ['<path d="M18 0l9 9-5 5-4-4-4 4-5-5z" fill="#ff8080"/><path d="M0 18l9-9 9 9-9 9z" fill="#80b3ff"/><path d="M36 18l-9 9-9-9 9-9z" fill="#8ccf5c"/><path d="M18 36l-9-9 9-9 9 9z" fill="#ffe680"/><path d="M15 8l9 10M18 12v14" stroke="#eee" stroke-width="2"/><circle cx="18" cy="18" r="2.500" fill="#eee"/><circle cx="24" cy="18" r="2.500" fill="#eee"/>'],
 ['<path d="M2 0l16 8 16-8v28l-16 8-16-8zM9 11v13l9 4 9-4v-13l-9 5z" fill="#c02b2b" fill-rule="evenodd"/>'],
 ['<circle cx="18" cy="18" r="17" fill="#fbc116"/><path d="M18 18L3 10a17 17 0 0 1 30 0z" fill="#e23b2e"/><path d="M3 10l10 17 5 0-3 8A17 17 0 0 1 3 10z" fill="#229647"/><path d="M18 10h15a17 17 0 0 0-30 0l7 11z" fill="#e23b2e"/><circle cx="18" cy="18" r="8" fill="#fff"/><circle cx="18" cy="18" r="6.300" fill="#2d7bea"/>','dot'],
 [cmd],[cmd],[ana],
 ['<rect x="1" y="4" width="34" height="28" fill="#1c4a98"/><path d="M2 5h32v4h-32z" fill="#3f8fe8"/><path d="M2 10h31v20h-31z" fill="#000"/><text x="3" y="19" font-size="8" fill="#fff" font-family="Liberation Mono" textLength="28">MySQL&gt;</text>'],
 ['<path d="M0 0h36v36h-36z" fill="#0078d4"/><path d="M18 6h9v24h-9z" fill="#e09a00"/><path d="M13 12h9v18h-9z" fill="#f2b91c"/><path d="M8 18h8v12h-8z" fill="#fbd95a"/>','on'],
 [ana,'dot']];
document.getElementById('apps').innerHTML=apps.map(([a,s])=>`<div class="w-[66.060px] flex justify-center pt-[8px]"><div class="w-[56px] h-[58px] flex flex-col items-center rounded-[5px] ${s==='on'?'bg-[#f5f5f5] shadow-[0_0_1px_1px_rgba(0,0,0,0.05)]':''}"><svg class="w-9 h-9 mt-[11px] shrink-0" viewBox="0 0 36 36">${a}</svg><i class="${s==='on'?'w-6 bg-[#0078d4] mt-[6px]':s?'w-[9px] bg-[#797979] mt-[6px]':'hidden'} h-[5px] rounded-full"></i></div></div>`).join('');
</script>
</body>
</html>
